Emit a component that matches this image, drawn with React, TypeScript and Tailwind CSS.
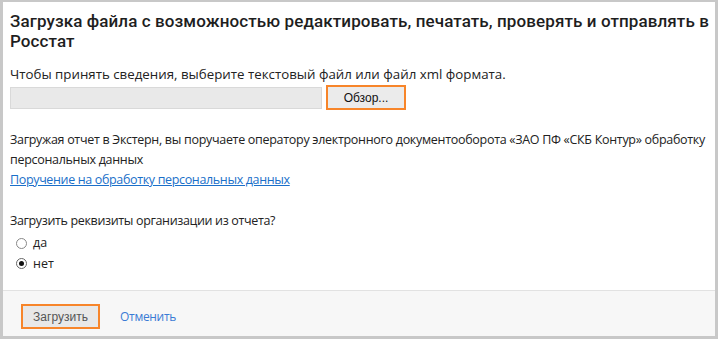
import React from "react";

export default function App() {
  return (
    <div className="w-[720px] h-[342px] bg-white" style={{ fontFamily: '"Open Sans", "Noto Sans", sans-serif' }}>
      <div className="w-[718px] h-[339px] border-[3px] border-t-2 border-[#c8c8c8] flex flex-col text-[#222]">
        <div className="flex-1 pl-[7px] pr-[3px]">
          <h1
            className="text-[17px] leading-[20px] font-medium mt-[9px] tracking-[0.1px] text-[#1e1e1e]"
            style={{ fontFamily: 'Roboto, "Open Sans", sans-serif' }}
          >
            Загрузка файла с возможностью редактировать, печатать, проверять и отправлять в Росстат
          </h1>
          <div className="mt-[14px] text-[13.3px] leading-[18px]">
            Чтобы принять сведения, выберите текстовый файл или файл xml формата.
          </div>
          <div className="flex items-center gap-[4px] mt-[2px]">
            <div className="w-[312px] h-[22px] bg-[#e9e9e9] border border-[#d9d9d9]" />
            <button
              className="w-[80px] h-[25px] bg-[#ebebeb] border-2 border-[#f7852a] text-[12px] text-[#111]"
              style={{ fontFamily: '"Liberation Sans", Arial, sans-serif' }}
            >
              Обзор...
            </button>
          </div>
          <div className="mt-[20px] text-[12.5px] leading-[20px] tracking-[-0.3px]">
            Загружая отчет в Экстерн, вы поручаете оператору электронного документооборота «ЗАО ПФ «СКБ Контур» обработку персональных данных
          </div>
          <a className="block text-[12.5px] leading-[20px] tracking-[-0.35px] text-[#1a6fc9] underline">
            Поручение на обработку персональных данных
          </a>
          <div className="mt-[21px] text-[12.5px] leading-[20px] tracking-[-0.35px]">
            Загрузить реквизиты организации из отчета?
          </div>
          <div className="mt-[2px] flex items-center gap-[6px] h-[20px] pl-[6px]">
            <span className="w-[11px] h-[11px] rounded-full border border-[#888] bg-white" />
            <span className="text-[12.5px] leading-[20px]">да</span>
          </div>
          <div className="flex items-center gap-[6px] h-[21px] pl-[6px]">
            <span className="w-[11px] h-[11px] rounded-full border border-[#666] bg-white flex items-center justify-center">
              <span className="w-[5px] h-[5px] rounded-full bg-[#111]" />
            </span>
            <span className="text-[12.5px] leading-[20px]">нет</span>
          </div>
        </div>
        <div className="h-[46px] border-t border-[#e2e2e2] bg-[#f7f7f7] flex items-start pt-[13px] pl-[18px] gap-[20px]">
          <button
            className="w-[79px] h-[25px] bg-[#e8e8e8] border-2 border-[#f7852a] text-[12px] text-[#555]"
            style={{ fontFamily: '"Liberation Sans", Arial, sans-serif' }}
          >
            Загрузить
          </button>
          <a className="text-[12px] leading-[25px] tracking-[-0.3px] text-[#3a7bd5]">Отменить</a>
        </div>
      </div>
    </div>
  );
}
